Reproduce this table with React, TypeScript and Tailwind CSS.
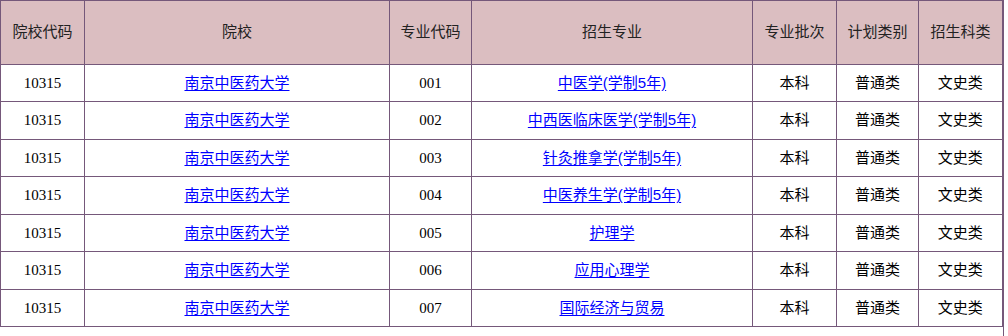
const headers = ['院校代码', '院校', '专业代码', '招生专业', '专业批次', '计划类别', '招生科类'];
const widths = ['w-[84px]', 'w-[305px]', 'w-[82px]', 'w-[281px]', 'w-[84px]', 'w-[82px]', 'w-[84px]'];

const rows = [
  { code: '001', major: '中医学(学制5年)' },
  { code: '002', major: '中西医临床医学(学制5年)' },
  { code: '003', major: '针灸推拿学(学制5年)' },
  { code: '004', major: '中医养生学(学制5年)' },
  { code: '005', major: '护理学' },
  { code: '006', major: '应用心理学' },
  { code: '007', major: '国际经济与贸易' },
];

const cell = 'border border-[#75587a] text-center align-middle p-0';
const link = "text-[#0000ff] underline underline-offset-2 font-['Liberation_Sans','Noto_Sans_CJK_SC',sans-serif]";

export default function App() {
  return (
    <div className="w-[1004px] h-[336px] bg-white border-r border-[#75587a]">
      <table className="table-fixed border-collapse w-[1003px] text-[15px] text-black font-['Liberation_Serif','Noto_Sans_CJK_SC',serif]">
        <colgroup>
          {widths.map((w, i) => (
            <col key={i} className={w} />
          ))}
        </colgroup>
        <thead>
          <tr className="h-[63.5px] bg-[#dbbec1]">
            {headers.map((h) => (
              <th key={h} className={`${cell} font-normal text-[#222]`}>
                {h}
              </th>
            ))}
          </tr>
        </thead>
        <tbody>
          {rows.map((r) => (
            <tr key={r.code} className="h-[37.57px]">
              <td className={cell}>10315</td>
              <td className={cell}>
                <a href="#" className={link}>南京中医药大学</a>
              </td>
              <td className={cell}>{r.code}</td>
              <td className={cell}>
                <a href="#" className={link}>{r.major}</a>
              </td>
              <td className={cell}>本科</td>
              <td className={cell}>普通类</td>
              <td className={`${cell} border-r-2`}>文史类</td>
            </tr>
          ))}
        </tbody>
      </table>
    </div>
  );
}
